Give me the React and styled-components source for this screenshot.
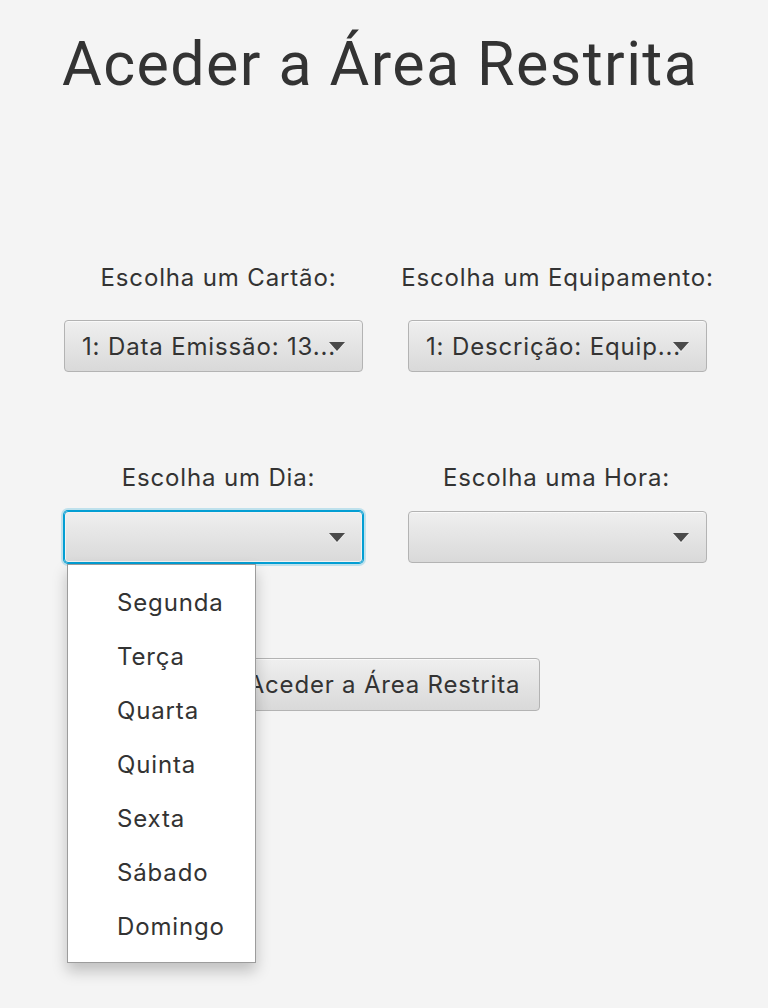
import React from "react";
import styled, { createGlobalStyle } from "styled-components";

const Global = createGlobalStyle`
  html, body { margin: 0; padding: 0; background: #f4f4f4; }
  body { font-family: Inter, "Noto Sans", sans-serif; color: #333; }
`;

const Page = styled.div`
  position: relative;
  width: 768px;
  height: 1008px;
  background: #f4f4f4;
  padding-top: 24px;
  box-sizing: border-box;
`;

const Title = styled.h1`
  margin: 0 0 0 62px;
  font-family: Roboto, Inter, sans-serif;
  font-weight: 400;
  font-size: 61px;
  line-height: 80px;
  color: #333;
  letter-spacing: 1.4px;
`;

const Section = styled.div`
  margin-top: ${(p) => p.$top}px;
  display: grid;
  grid-template-columns: 299px 299px;
  column-gap: 45px;
  row-gap: ${(p) => p.$gap}px;
  padding-left: 64px;
`;

const Label = styled.div`
  font-size: 24px;
  line-height: 26px;
  letter-spacing: 0.85px;
  text-align: center;
  margin-left: ${(p) => -30 + (p.$shift || 0)}px;
  margin-right: ${(p) => -30 - (p.$shift || 0)}px;
  color: #333;
  white-space: nowrap;
`;

const Combo = styled.div`
  position: relative;
  height: 52px;
  box-sizing: border-box;
  border: 1px solid #b3b3b3;
  border-radius: 4px;
  background: linear-gradient(#efefef, #d9d9d9);
  box-shadow: inset 0 1px 0 rgba(255, 255, 255, 0.6);
  display: flex;
  align-items: center;
  padding-left: 17px;
  font-size: 24px;
  letter-spacing: 0.85px;
  color: #333;
  white-space: nowrap;
  overflow: hidden;
  ${(p) =>
    p.$focused &&
    `
    border: 1px solid #039ed3;
    box-shadow: 0 0 0 1px #039ed3, 0 0 0 3px rgba(3,158,211,0.22), inset 0 0 0 1px #f2f2f2;
  `}
`;

const Arrow = styled.span`
  position: absolute;
  right: 17px;
  top: 50%;
  margin-top: -4px;
  width: 0;
  height: 0;
  border-left: 8px solid transparent;
  border-right: 8px solid transparent;
  border-top: 9px solid #4a4a4a;
  filter: drop-shadow(0 1px 0 rgba(255, 255, 255, 0.7));
`;

const ButtonRow = styled.div`
  margin-top: 95px;
  display: flex;
  justify-content: center;
`;

const Button = styled.button`
  height: 53px;
  padding: 0 19px;
  font-family: Inter, "Noto Sans", sans-serif;
  font-size: 24px;
  letter-spacing: 0.8px;
  color: #333;
  border: 1px solid #b3b3b3;
  border-radius: 4px;
  background: linear-gradient(#efefef, #d9d9d9);
  box-shadow: inset 0 1px 0 rgba(255, 255, 255, 0.6);
`;

const Popup = styled.ul`
  position: absolute;
  left: 67px;
  top: 564px;
  width: 189px;
  margin: 0;
  padding: 10px 0 9px;
  box-sizing: border-box;
  list-style: none;
  background: #fff;
  border: 1px solid #9c9c9c;
  box-shadow: 0 8px 14px rgba(0, 0, 0, 0.22);
`;

const Item = styled.li`
  height: 54px;
  display: flex;
  align-items: center;
  padding-left: 49px;
  font-size: 24px;
  letter-spacing: 0.85px;
  color: #333;
`;

const days = ["Segunda", "Terça", "Quarta", "Quinta", "Sexta", "Sábado", "Domingo"];

export default function App() {
  return (
    <Page>
      <Global />
      <Title>Aceder a Área Restrita</Title>
      <Section $top={161} $gap={29}>
        <Label $shift={5}>Escolha um Cartão:</Label>
        <Label $shift={0}>Escolha um Equipamento:</Label>
        <Combo>
          1: Data Emissão: 13...
          <Arrow />
        </Combo>
        <Combo>
          1: Descrição: Equip...
          <Arrow />
        </Combo>
      </Section>
      <Section $top={93} $gap={20}>
        <Label $shift={5}>Escolha um Dia:</Label>
        <Label $shift={-1}>Escolha uma Hora:</Label>
        <Combo $focused>
          <Arrow />
        </Combo>
        <Combo>
          <Arrow />
        </Combo>
      </Section>
      <ButtonRow>
        <Button>Aceder a Área Restrita</Button>
      </ButtonRow>
      <Popup>
        {days.map((d) => (
          <Item key={d}>{d}</Item>
        ))}
      </Popup>
    </Page>
  );
}
